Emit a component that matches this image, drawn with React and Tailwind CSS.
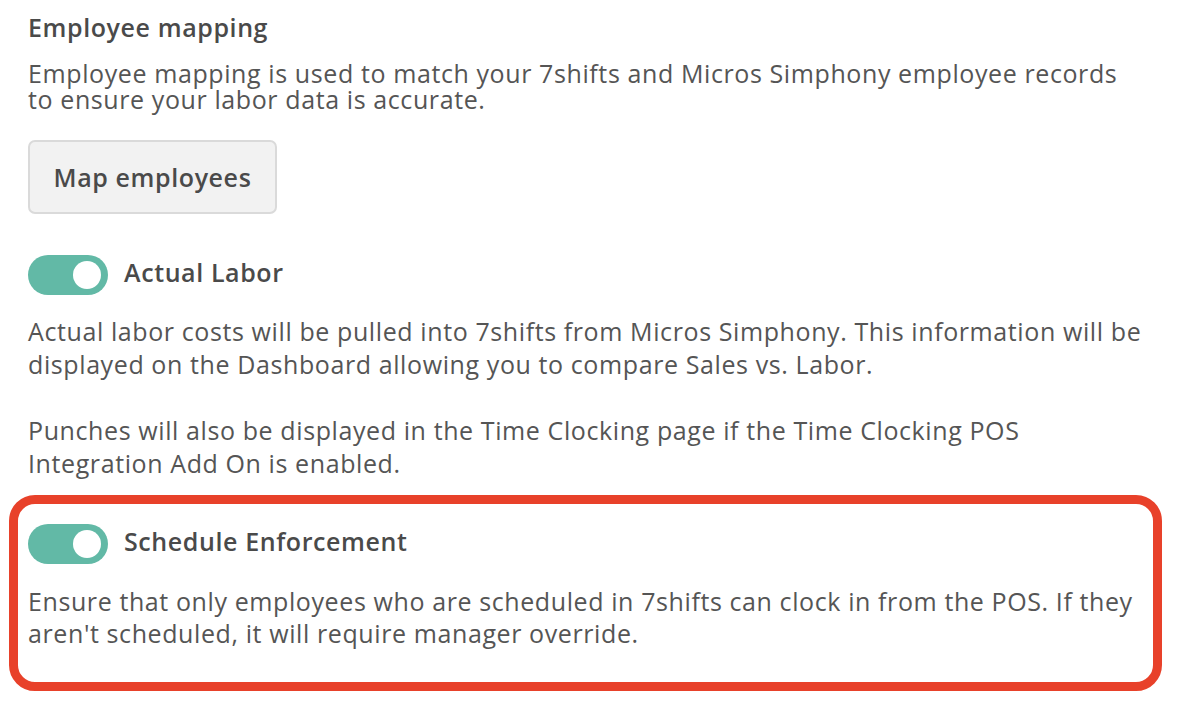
function Toggle() {
  return (
    <div className="flex h-[40px] w-[80px] shrink-0 items-center justify-end rounded-full bg-[#62b9a6] px-[7px]">
      <div className="h-[28px] w-[28px] rounded-full bg-white" />
    </div>
  );
}

function ToggleRow({ label }) {
  return (
    <div className="flex h-[40px] items-center gap-[16px]">
      <Toggle />
      <span className="mb-[6px] leading-[34px] font-semibold text-[#4a4a4a]">{label}</span>
    </div>
  );
}

export default function App() {
  return (
    <div
      className="h-[712px] w-[1186px] overflow-hidden bg-white pl-[28px] text-[25px] leading-[34px] tracking-[0.6px] text-[#555555]"
      style={{ fontFamily: '"Open Sans", Lato, sans-serif' }}
    >
      <h2 className="pt-[11px] leading-[32px] font-semibold text-[#4a4a4a]">Employee mapping</h2>
      <p className="mt-[17px] leading-[26px] whitespace-nowrap">
        Employee mapping is used to match your 7shifts and Micros Simphony employee records
        <br />
        to ensure your labor data is accurate.
      </p>
      <button className="mt-[28px] block h-[74px] w-[249px] rounded-[7px] border-2 border-[#dadada] bg-[#f2f2f2] font-semibold tracking-[0.6px] text-[#4a4a4a]">
        Map employees
      </button>

      <div className="mt-[41px]">
        <ToggleRow label="Actual Labor" />
      </div>
      <p className="mt-[20px] leading-[33px] whitespace-nowrap">
        Actual labor costs will be pulled into 7shifts from Micros Simphony. This information will be
        <br />
        displayed on the Dashboard allowing you to compare Sales vs. Labor.
        <br />
        <br />
        Punches will also be displayed in the Time Clocking page if the Time Clocking POS
        <br />
        Integration Add On is enabled.
      </p>

      <div className="mt-[15px] ml-[-19px] w-[1153px] rounded-[26px] border-[9px] border-[#e8412a] pt-[20px] pb-[33px] pl-[10px]">
        <ToggleRow label="Schedule Enforcement" />
        <p className="mt-[21px] leading-[32px] whitespace-nowrap">
          Ensure that only employees who are scheduled in 7shifts can clock in from the POS. If they
          <br />
          aren't scheduled, it will require manager override.
        </p>
      </div>
    </div>
  );
}
